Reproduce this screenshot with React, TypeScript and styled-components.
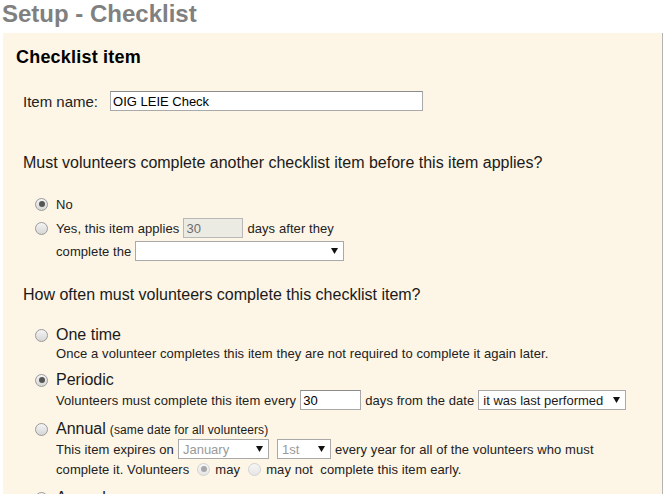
import React from 'react';
import styled, { createGlobalStyle, css } from 'styled-components';

const GlobalStyle = createGlobalStyle`
  body {
    margin: 0;
    background: #fff;
    font-family: "Liberation Sans", Arial, sans-serif;
    color: #222;
  }
`;

const PageTitle = styled.h1`
  margin: 0;
  padding-left: 2px;
  font-size: 24px;
  line-height: 28px;
  font-weight: bold;
  color: #808080;
`;

const Panel = styled.div`
  margin: 5px 0 0 3px;
  width: 646px;
  min-height: 470px;
  background: #fdf5e5;
  border-right: 1px solid #b4b4b4;
  padding: 13px 0 0 13px;
`;

const SectionTitle = styled.h2`
  margin: 0;
  font-size: 18px;
  line-height: 22px;
  font-weight: bold;
  color: #000;
  letter-spacing: 0.2px;
`;

const NameRow = styled.div`
  display: flex;
  align-items: center;
  margin-top: 23px;
  padding-left: 7px;
  height: 20px;
  font-size: 15px;
`;

const TextBox = styled.input<{ $width: number; $disabled?: boolean }>`
  box-sizing: border-box;
  width: ${({ $width }) => $width}px;
  height: 20px;
  margin: 0 4px;
  padding: 0 2px;
  border: 1px solid #a9a9a9;
  border-top-color: #8c8c8c;
  font-family: inherit;
  font-size: 13px;
  color: #000;
  background: #fff;
  outline: none;
  ${({ $disabled }) =>
    $disabled &&
    css`
      background: #ebebe4;
      color: #6d6d6d;
      border-color: #b8b8b8;
    `}
`;

const NameBox = styled(TextBox)`
  margin-left: 12px;
`;

const Question = styled.div<{ $top: number }>`
  margin-top: ${({ $top }) => $top}px;
  padding-left: 7px;
  font-size: 16px;
  line-height: 20px;
  color: #1a1a1a;
`;

const Choices = styled.div<{ $top: number }>`
  margin-top: ${({ $top }) => $top}px;
  padding-left: 19px;
`;

const Line = styled.div<{ $h?: number; $indent?: boolean }>`
  display: flex;
  align-items: center;
  height: ${({ $h }) => $h ?? 20}px;
  font-size: 13px;
  letter-spacing: 0.08px;
  white-space: nowrap;
  padding-left: ${({ $indent }) => ($indent ? '21px' : '0')};
`;

const Radio = styled.span<{ $checked?: boolean; $faded?: boolean }>`
  position: relative;
  box-sizing: border-box;
  flex: none;
  width: 13px;
  height: 13px;
  margin-right: 8px;
  border-radius: 50%;
  border: 1px solid ${({ $faded }) => ($faded ? '#d2d2d2' : '#9a9a9a')};
  background: ${({ $faded }) =>
    $faded
      ? 'linear-gradient(#f6f6f6, #e6e6e6)'
      : 'linear-gradient(#f4f4f4, #d6d6d6)'};
  ${({ $checked, $faded }) =>
    $checked &&
    css`
      &::after {
        content: '';
        position: absolute;
        left: 2.5px;
        top: 2.5px;
        width: 6px;
        height: 6px;
        border-radius: 50%;
        background: ${$faded ? '#a8a8a8' : '#555'};
      }
    `}
`;

const SmallRadio = styled(Radio)`
  margin: 0 5px 0 8px;
`;

const OptionBlock = styled.div<{ $top: number }>`
  margin-top: ${({ $top }) => $top}px;
`;

const OptionTitle = styled.div`
  display: flex;
  align-items: center;
  height: 20px;
  font-size: 16px;
  color: #1a1a1a;
  white-space: nowrap;
`;

const Aside = styled.span`
  font-size: 12px;
  margin-left: 4px;
  padding-top: 2px;
  letter-spacing: 0.1px;
`;

const OptionText = styled.div<{ $h?: number }>`
  display: flex;
  align-items: center;
  height: ${({ $h }) => $h ?? 20}px;
  padding-left: 21px;
  font-size: 13px;
  letter-spacing: 0.08px;
  white-space: nowrap;
`;

const SelectBox = styled.div<{ $width: number; $disabled?: boolean }>`
  box-sizing: border-box;
  display: flex;
  align-items: center;
  justify-content: space-between;
  width: ${({ $width }) => $width}px;
  height: 20px;
  margin: 0 4px;
  padding: 0 5px 0 4px;
  border: 1px solid #a9a9a9;
  background: #fff;
  font-size: 13px;
  letter-spacing: 0;
  color: ${({ $disabled }) => ($disabled ? '#9a9a9a' : '#1a1a1a')};
`;

const Arrow = styled.svg`
  flex: none;
  width: 7px;
  height: 6px;
`;

function Select({ width, value, disabled }: { width: number; value?: string; disabled?: boolean }) {
  return (
    <SelectBox $width={width} $disabled={disabled}>
      <span>{value}</span>
      <Arrow viewBox="0 0 7 6">
        <path d="M0 0h7L3.5 6z" fill="#111" />
      </Arrow>
    </SelectBox>
  );
}

export default function App() {
  return (
    <>
      <GlobalStyle />
      <PageTitle>Setup - Checklist</PageTitle>
      <Panel>
        <SectionTitle>Checklist item</SectionTitle>
        <NameRow>
          Item name:
          <NameBox $width={313} value="OIG LEIE Check" readOnly />
        </NameRow>

        <Question $top={42}>Must volunteers complete another checklist item before this item applies?</Question>
        <Choices $top={19}>
          <Line $h={24}>
            <Radio $checked />
            No
          </Line>
          <Line $h={24}>
            <Radio />
            Yes, this item applies
            <TextBox $width={60} $disabled value="30" readOnly />
            days after they
          </Line>
          <Line $h={22} $indent>
            complete the
            <Select width={209} />
          </Line>
        </Choices>

        <Question $top={23}>How often must volunteers complete this checklist item?</Question>
        <Choices $top={20}>
          <OptionBlock $top={0}>
            <OptionTitle>
              <Radio />
              One time
            </OptionTitle>
            <OptionText $h={16}>
              Once a volunteer completes this item they are not required to complete it again later.
            </OptionText>
          </OptionBlock>
          <OptionBlock $top={9}>
            <OptionTitle>
              <Radio $checked />
              Periodic
            </OptionTitle>
            <OptionText>
              Volunteers must complete this item every
              <TextBox $width={61} value="30" readOnly />
              days from the date
              <Select width={148} value="it was last performed" />
            </OptionText>
          </OptionBlock>
          <OptionBlock $top={9}>
            <OptionTitle>
              <Radio />
              Annual
              <Aside>(same date for all volunteers)</Aside>
            </OptionTitle>
            <OptionText>
              This item expires on
              <Select width={91} value="January" disabled />
              <Select width={54} value="1st" disabled />
              every year for all of the volunteers who must
            </OptionText>
            <OptionText>
              complete it. Volunteers
              <SmallRadio $checked $faded />
              may
              <SmallRadio $faded />
              may not&nbsp; complete this item early.
            </OptionText>
          </OptionBlock>
          <OptionBlock $top={9}>
            <OptionTitle>
              <Radio />
              Annual
              <Aside>(anniversary of date last completed)</Aside>
            </OptionTitle>
          </OptionBlock>
        </Choices>
      </Panel>
    </>
  );
}
